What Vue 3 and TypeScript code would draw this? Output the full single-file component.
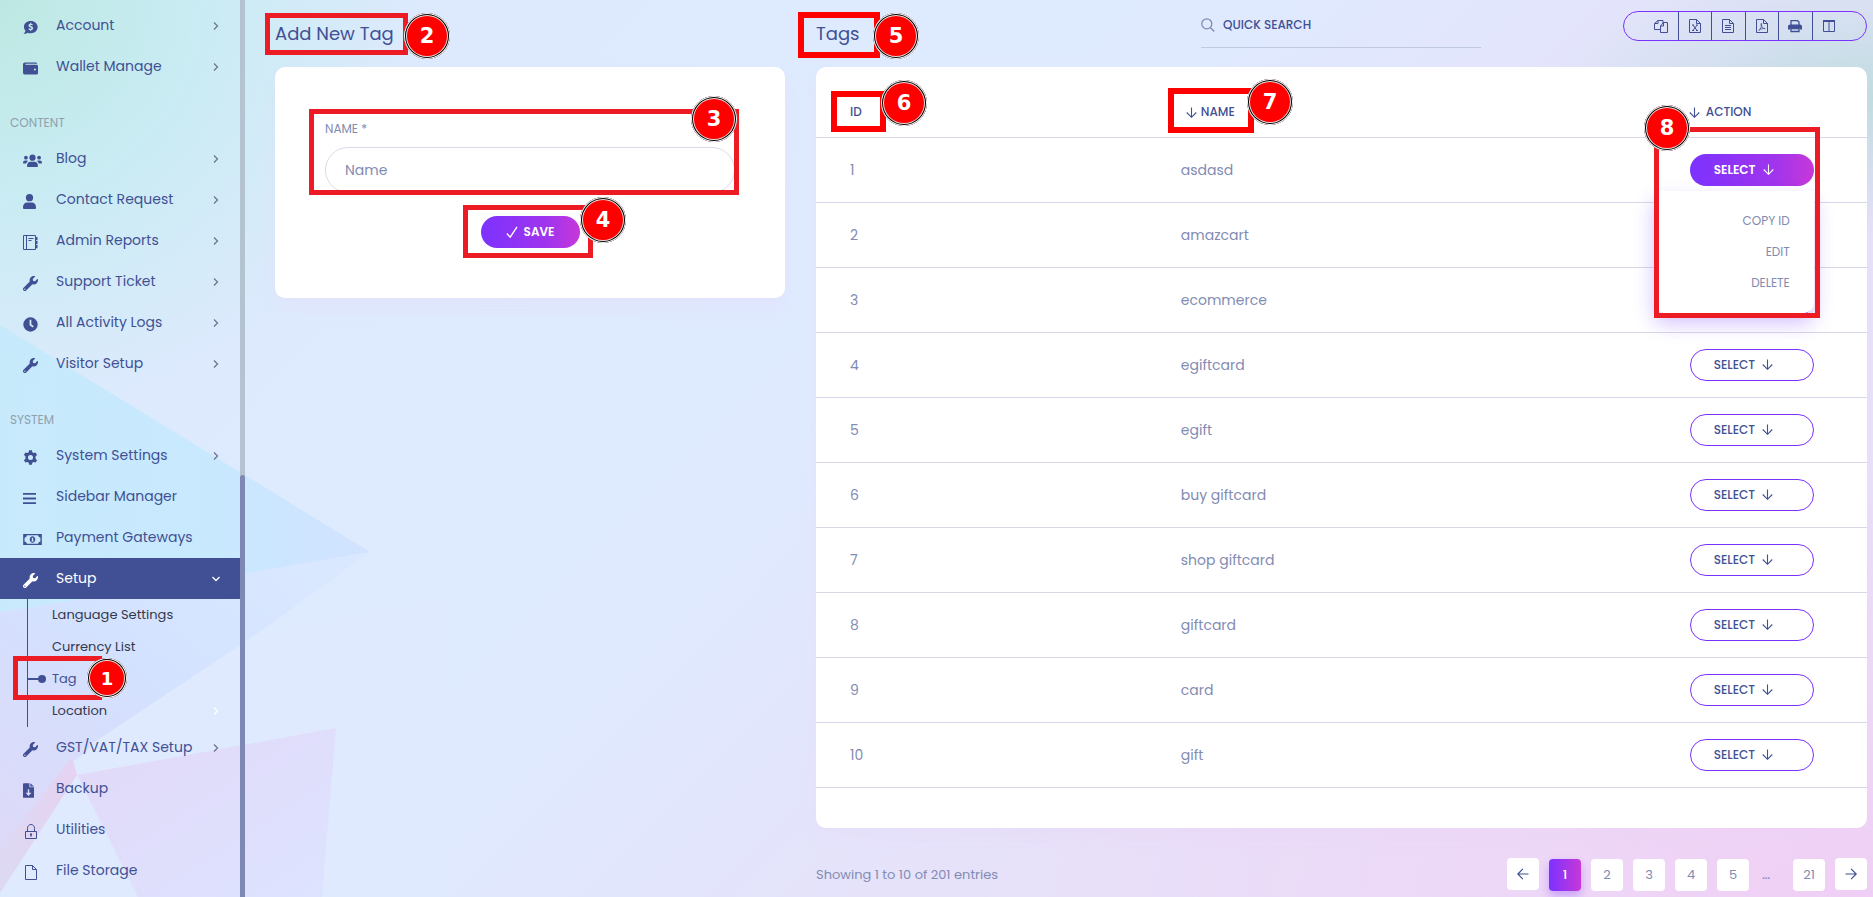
<script setup lang="ts">
import { ref } from 'vue'

interface NavItem {
  label: string
  icon: string
  arrow?: boolean
  children?: { label: string; active?: boolean; arrow?: boolean }[]
}
interface NavGroup {
  title?: string
  items: NavItem[]
}

const groups: NavGroup[] = [
  {
    items: [
      { label: 'Account', icon: 'comment', arrow: true },
      { label: 'Wallet Manage', icon: 'wallet', arrow: true },
    ],
  },
  {
    title: 'CONTENT',
    items: [
      { label: 'Blog', icon: 'users', arrow: true },
      { label: 'Contact Request', icon: 'user', arrow: true },
      { label: 'Admin Reports', icon: 'agenda', arrow: true },
      { label: 'Support Ticket', icon: 'wrench', arrow: true },
      { label: 'All Activity Logs', icon: 'clock', arrow: true },
      { label: 'Visitor Setup', icon: 'wrench', arrow: true },
    ],
  },
  {
    title: 'SYSTEM',
    items: [
      { label: 'System Settings', icon: 'cog', arrow: true },
      { label: 'Sidebar Manager', icon: 'bars', arrow: false },
      { label: 'Payment Gateways', icon: 'money', arrow: false },
      {
        label: 'Setup',
        icon: 'wrench',
        children: [
          { label: 'Language Settings' },
          { label: 'Currency List' },
          { label: 'Tag', active: true },
          { label: 'Location', arrow: true },
        ],
      },
      { label: 'GST/VAT/TAX Setup', icon: 'wrench', arrow: true },
      { label: 'Backup', icon: 'download' },
      { label: 'Utilities', icon: 'lock' },
      { label: 'File Storage', icon: 'file' },
    ],
  },
]

const tags = ['asdasd', 'amazcart', 'ecommerce', 'egiftcard', 'egift', 'buy giftcard', 'shop giftcard', 'giftcard', 'card', 'gift']
const exportTools = ['copy', 'excel', 'text', 'pdf', 'print', 'columns']
const pages = ['1', '2', '3', '4', '5', '…', '21']
const openRow = ref(0)
const tagName = ref('')
const query = ref('')
const currentPage = ref('1')
</script>

<template>
  <svg class="defs" aria-hidden="true">
    <symbol id="i-comment" viewBox="0 0 16 16"><path fill="currentColor" fill-rule="evenodd" d="M8.3 1C4 1 1 3.700 1 7.200c0 1.700.7 3.200 1.700 4.300C2.400 12.800 1.500 13.800.6 14.700c1.900.2 3.400-.4 4.500-1.200 1 .4 2 .6 3.200.6 4.200 0 7.300-2.900 7.300-6.600S12.500 1 8.300 1zM7.700 3h1.100v1c.6 0 1.200.2 1.700.5l-.5 1.200c-.7-.4-2.100-.6-2.100.2 0 .9 2.900.6 2.900 2.800 0 1-.7 1.700-2 1.900v1H7.700v-.9c-.7-.1-1.400-.3-1.900-.7l.6-1.200c.9.6 2.500.7 2.500-.1 0-1-3-.6-3-2.800 0-1 .7-1.700 1.800-1.900z"/></symbol>
    <symbol id="i-wallet" viewBox="0 0 16 16"><path fill="currentColor" fill-rule="evenodd" d="M2 1.500h12c.6 0 1 .4 1 1V3H3c-.7 0-.7 1 0 1h11.500c.8 0 1.500.7 1.500 1.500V13c0 .8-.7 1.500-1.500 1.500H2c-1.100 0-2-.9-2-2v-9c0-1.100.9-2 2-2zM12.700 8a1.100 1.100 0 100 2.200 1.100 1.100 0 000-2.200z"/></symbol>
    <symbol id="i-users" viewBox="0 0 20 16"><g fill="currentColor"><circle cx="10" cy="5" r="3.300"/><circle cx="3" cy="5" r="2"/><circle cx="17" cy="5" r="2"/><path d="M4.300 15v-2c0-2.200 1.500-3.700 3.500-3.700h4.400c2 0 3.500 1.500 3.500 3.700v2zM0 11.200V10c0-1.200.8-2 2-2h2c.5 0 1 .2 1.300.5C4.300 9.100 3.600 10 3.300 11.200zM20 11.200V10c0-1.200-.8-2-2-2h-2c-.5 0-1 .2-1.300.5 1 .6 1.700 1.500 2 2.700z"/></g></symbol>
    <symbol id="i-user" viewBox="0 0 14 16"><g fill="currentColor"><circle cx="7" cy="3.900" r="3.900"/><path d="M0 16v-2.200C0 11 2 9 4.600 9h4.800C12 9 14 11 14 13.800V15c0 .6-.4 1-1 1H1c-.6 0-1-.4-1-1z"/></g></symbol>
    <symbol id="i-agenda" viewBox="0 0 15 15"><path fill="none" stroke="currentColor" d="M.5.500h12v14H.5zM3.500.5v14M5.500 3.500h5M5.500 5.500h3"/><path fill="currentColor" d="M12.500 2h2v3.300h-2zM12.500 6h2v3.300h-2zM12.500 10h2v3.300h-2z"/></symbol>
    <symbol id="i-wrench" viewBox="0 0 512 512"><path fill="currentColor" fill-rule="evenodd" d="M507.730 109.100c-2.240-9.030-13.540-12.090-20.120-5.510l-74.360 74.360-67.880-11.310-11.310-67.880 74.360-74.360c6.620-6.620 3.430-17.900-5.660-20.160-47.380-11.740-99.550.91-136.580 37.930-39.640 39.640-50.550 97.100-34.050 147.200L18.740 402.760c-24.990 24.990-24.990 65.510 0 90.500 24.990 24.990 65.510 24.990 90.500 0l213.210-213.210c50.120 16.710 107.470 5.680 147.370-34.220 37.070-37.070 49.700-89.320 37.910-136.730zM64 472c-13.250 0-24-10.750-24-24s10.750-24 24-24 24 10.750 24 24-10.750 24-24 24z"/></symbol>
    <symbol id="i-clock" viewBox="0 0 16 16"><path fill="currentColor" fill-rule="evenodd" d="M8 .3a7.700 7.700 0 100 15.400A7.700 7.700 0 008 .3zM7 3h1.900v4.800l2.600 2-1.100 1.500L7 8.700z"/></symbol>
    <symbol id="i-cog" viewBox="0 0 16 16"><path fill="currentColor" fill-rule="evenodd" d="M6.500.3h3l.4 2.100 1.600.9 2-.7 1.500 2.600-1.600 1.400v2.800l1.600 1.400-1.500 2.600-2-.7-1.600.9-.4 2.100h-3l-.4-2.100-1.600-.9-2 .7L1 10.800l1.600-1.400V6.600L1 5.200l1.500-2.600 2 .7 1.600-.9zM8 5.300a2.700 2.700 0 100 5.400 2.700 2.700 0 000-5.400z"/></symbol>
    <symbol id="i-bars" viewBox="0 0 14 16"><path stroke="currentColor" stroke-width="2" d="M0 3h14M0 8h14M0 13h14"/></symbol>
    <symbol id="i-money" viewBox="0 0 20 16"><path fill="none" stroke="currentColor" stroke-width="1.500" d="M.8 2.800h18.400v10.400H.8z"/><path fill="currentColor" fill-rule="evenodd" d="M1 3h3a3 3 0 01-3 3zM19 3h-3a3 3 0 003 3zM1 13h3a3 3 0 00-3-3zM19 13h-3a3 3 0 013-3zM10 4.500c-1.700 0-3 1.500-3 3.500s1.300 3.500 3 3.500 3-1.500 3-3.500-1.300-3.500-3-3.500zM9.300 6h1.400v3h.6v1H8.800V9h.6V7H9z"/></symbol>
    <symbol id="i-download" viewBox="0 0 12 16"><path fill="currentColor" fill-rule="evenodd" d="M1 0h6v4.500h5V15c0 .6-.4 1-1 1H1c-.6 0-1-.4-1-1V1c0-.6.4-1 1-1zM8 0l4 3.600H8zM5.200 6.500v4H2.800L6 14l3.200-3.500H6.800v-4z"/></symbol>
    <symbol id="i-lock" viewBox="0 0 15 15"><path fill="none" stroke="currentColor" d="M2.500 7.500h11v7h-11zM4.500 7.500V4.300C4.500 2 6 .5 8 .5s3.500 1.500 3.500 3.800v3.200"/><path stroke="currentColor" stroke-width="1.500" d="M8 9.500v3M7 10.200h2"/></symbol>
    <symbol id="i-file" viewBox="0 0 15 15"><path fill="none" stroke="currentColor" d="M2.500.5h7l4 4v10h-11zM9.500.5v4h4"/></symbol>
    <symbol id="i-copy" viewBox="0 0 14 14"><path fill="none" stroke="currentColor" d="M6.500 10.500h-6v-6l3.500-3h5v3M4 1.500v3H.5M6.500 7l3-3.500h4v10h-7zM9.500 3.500V7h-3"/></symbol>
    <symbol id="i-excel" viewBox="0 0 12 14"><path fill="none" stroke="currentColor" d="M.5.500h7l4 4v9H.5zM7.500.5v4h4M4 6l4 5.500M8 6l-4 5.500M3 6h2M7 6h2M3 11.500h2M7 11.500h2"/></symbol>
    <symbol id="i-text" viewBox="0 0 12 14"><path fill="none" stroke="currentColor" d="M.5.500h7l4 4v9H.5zM7.500.5v4h4M3 6.500h6M3 8.500h6M3 10.500h6"/></symbol>
    <symbol id="i-pdf" viewBox="0 0 12 14"><path fill="none" stroke="currentColor" d="M.5.500h7l4 4v9H.5zM7.500.5v4h4"/><path fill="none" stroke="currentColor" stroke-width=".8" d="M2.500 11.500c2-1 3.300-4 3.200-6.500 0-1-.9-.8-.8.200.3 2.500 2 4.300 4.300 4.600M3 11c1.500-1 4-1.800 6-1.400"/></symbol>
    <symbol id="i-print" viewBox="0 0 14 14"><path fill="none" stroke="currentColor" stroke-width="1.300" d="M3 6V1.700h6.500L11 3v3M3 9.500h8v3H3z"/><path fill="currentColor" d="M2 5.500h10c1 0 2 .8 2 2v3h-2.500V9h-9v1.500H0v-3c0-1.200 1-2 2-2z"/></symbol>
    <symbol id="i-columns" viewBox="0 0 14 14"><path fill="none" stroke="currentColor" d="M1.500 1.500h11v11h-11zM7 2.500v10"/><path fill="currentColor" d="M1 1h12v2H1z"/></symbol>
    <symbol id="i-search" viewBox="0 0 14 14"><path fill="none" stroke="currentColor" stroke-width="1.300" d="M9.300 9.500l4 4M10.800 5.800a5 5 0 11-10 0 5 5 0 0110 0z"/></symbol>
    <symbol id="i-down" viewBox="0 0 12 12"><path fill="none" stroke="currentColor" stroke-width="1.200" d="M6 .5v10.500M.8 6L6 11.200 11.200 6"/></symbol>
    <symbol id="i-left" viewBox="0 0 12 12"><path fill="none" stroke="currentColor" stroke-width="1.200" d="M11.500 6H.9M5.900.8L.8 6l5.100 5.200"/></symbol>
    <symbol id="i-right" viewBox="0 0 12 12"><path fill="none" stroke="currentColor" stroke-width="1.200" d="M.5 6h10.600M6.100.8L11.200 6l-5.100 5.200"/></symbol>
    <symbol id="i-check" viewBox="0 0 12 12"><path fill="none" stroke="currentColor" stroke-width="1.300" d="M.8 7.500l3.400 3.700L11 .8"/></symbol>
    <symbol id="i-chevron" viewBox="0 0 8 8"><path fill="none" stroke="currentColor" stroke-width="1.300" d="M2 .5L5.500 4 2 7.500"/></symbol>
  </svg>

  <div class="page">
    <svg class="backdrop" viewBox="0 0 1873 897" preserveAspectRatio="none" aria-hidden="true">
      <defs>
        <linearGradient id="bg-cyan" x1="0" y1="0" x2="1" y2="0"><stop offset="0" stop-color="#c2eafb" /><stop offset="0.6" stop-color="#c3e8ff" /><stop offset="1" stop-color="#cfe0ff" /></linearGradient>
        <linearGradient id="bg-blue" x1="1" y1="0" x2="0" y2="1"><stop offset="0" stop-color="#dbe9ff" /><stop offset="0.5" stop-color="#d3e2ff" /><stop offset="1" stop-color="#ddd8f8" /></linearGradient>
        <linearGradient id="bg-pink" x1="0" y1="0" x2="1" y2="1"><stop offset="0" stop-color="#e2d9f8" /><stop offset="1" stop-color="#dde3ff" /></linearGradient>
        <linearGradient id="bg-rose" x1="0" y1="0" x2="1" y2="0"><stop offset="0" stop-color="#ddd9f2" /><stop offset="1" stop-color="#e6d2f2" /></linearGradient>
      </defs>
      <polygon class="cyan" points="0,325 70,368 370,552 255,572 0,612" />
      <polygon class="blue" points="0,612 255,572 370,552 255,635 75,760 0,850" />
      <polygon class="pale" points="75,775 90,745 255,635 440,600 440,897 0,897" />
      <polygon class="pink" points="77,775 336,728 322,897 138,897" />
      <polygon class="rose" points="72,757 77,775 0,893 0,850" />
    </svg>

    <nav class="sidebar" aria-label="Main menu">
      <div v-for="(group, g) in groups" :key="g">
        <h2 v-if="group.title" class="group-title">{{ group.title }}</h2>
        <ul class="menu">
          <li v-for="item in group.items" :key="item.label">
            <a href="#" class="menu-link" :class="{ open: item.children }">
              <svg class="menu-icon" :class="item.icon"><use :href="`#i-${item.icon}`" /></svg>
              <span>{{ item.label }}</span>
              <svg v-if="item.arrow || item.children" class="chevron"><use href="#i-chevron" /></svg>
            </a>
            <ul v-if="item.children" class="submenu">
              <li v-for="child in item.children" :key="child.label">
                <a href="#" :class="{ active: child.active }">
                  {{ child.label }}
                  <svg v-if="child.arrow" class="chevron"><use href="#i-chevron" /></svg>
                </a>
              </li>
            </ul>
          </li>
        </ul>
      </div>
    </nav>
    <div class="track"><div class="thumb"></div></div>

    <main class="content">
      <section>
        <header class="section-head"><h1>Add New Tag</h1></header>
        <form class="card form-card" @submit.prevent>
          <label for="tag-name">NAME *</label>
          <input id="tag-name" v-model="tagName" type="text" placeholder="Name" />
          <button type="submit" class="save"><svg><use href="#i-check" /></svg>SAVE</button>
        </form>
      </section>

      <section>
        <header class="section-head">
          <h1>Tags</h1>
          <label class="search">
            <svg><use href="#i-search" /></svg>
            <input v-model="query" type="search" placeholder="QUICK SEARCH" aria-label="Quick search" />
          </label>
          <div class="tools">
            <button v-for="tool in exportTools" :key="tool" type="button" :aria-label="tool">
              <svg><use :href="`#i-${tool}`" /></svg>
            </button>
          </div>
        </header>
        <div class="card table-card">
          <table>
            <colgroup><col class="c-id" /><col class="c-name" /><col class="c-action" /></colgroup>
            <thead>
              <tr>
                <th>ID</th>
                <th><span class="sort"><svg><use href="#i-down" /></svg>NAME</span></th>
                <th><span class="sort wide"><svg><use href="#i-down" /></svg>ACTION</span></th>
              </tr>
            </thead>
            <tbody>
              <tr v-for="(tag, i) in tags" :key="tag">
                <td>{{ i + 1 }}</td>
                <td>{{ tag }}</td>
                <td>
                  <div class="dropdown">
                    <button type="button" class="select" :class="{ open: openRow === i }" @click="openRow = openRow === i ? -1 : i">
                      SELECT<svg><use href="#i-down" /></svg>
                    </button>
                    <div v-if="openRow === i" class="options">
                      <a href="#">COPY ID</a>
                      <a href="#">EDIT</a>
                      <a href="#">DELETE</a>
                    </div>
                  </div>
                </td>
              </tr>
            </tbody>
          </table>
        </div>
        <footer class="table-foot">
          <p>Showing 1 to 10 of 201 entries</p>
          <div class="pager">
            <button type="button" class="step" aria-label="Previous"><svg><use href="#i-left" /></svg></button>
            <template v-for="page in pages" :key="page">
              <span v-if="page === '…'" class="dots">…</span>
              <button v-else type="button" :class="{ current: page === currentPage }" @click="currentPage = page">{{ page }}</button>
            </template>
            <button type="button" class="step" aria-label="Next"><svg><use href="#i-right" /></svg></button>
          </div>
        </footer>
      </section>
    </main>

    <div class="frame f1"></div><b class="mark m1">1</b>
    <div class="frame f2"></div><b class="mark m2">2</b>
    <div class="frame f3"></div><b class="mark m3">3</b>
    <div class="frame f4"></div><b class="mark m4">4</b>
    <div class="frame bold f5"></div><b class="mark m5">5</b>
    <div class="frame bold f6"></div><b class="mark m6">6</b>
    <div class="frame bold f7"></div><b class="mark m7">7</b>
    <div class="frame f8"></div><b class="mark m8">8</b>
  </div>
</template>

<style>
body {
  margin: 0;
}
</style>

<style scoped>
* {
  box-sizing: border-box;
}
.defs {
  position: absolute;
  width: 0;
  height: 0;
}
.page {
  position: relative;
  display: flex;
  min-height: 100vh;
  overflow: hidden;
  font-family: Poppins, Inter, "Open Sans", sans-serif;
  font-size: 14px;
  color: #828bb2;
  background:
    radial-gradient(circle at 0 0, #bde8e2 0, rgba(195, 236, 240, 0.8) 180px, rgba(200, 232, 245, 0) 420px),
    radial-gradient(ellipse at 100% 11%, #bfdddf 0, rgba(200, 222, 232, 0.8) 130px, rgba(225, 225, 250, 0) 330px),
    radial-gradient(ellipse at 100% 100%, #f0cef5 0, rgba(239, 213, 246, 0.8) 340px, rgba(236, 220, 247, 0) 900px),
    linear-gradient(135deg, #dceafc 0%, #dfeaff 45%, #e6e2fa 65%, #e8dff8 100%);
}
.backdrop {
  position: absolute;
  inset: 0;
  width: 100%;
  height: 100%;
}
.cyan {
  fill: url(#bg-cyan);
  opacity: 0.8;
}
.blue {
  fill: url(#bg-blue);
}
.pale {
  fill: #dfeaff;
}
.pink {
  fill: url(#bg-pink);
}
.rose {
  fill: url(#bg-rose);
}
a {
  color: inherit;
  text-decoration: none;
}
button {
  font: inherit;
  color: inherit;
  cursor: pointer;
}
ul {
  margin: 0;
  padding: 0;
  list-style: none;
}
.sidebar {
  position: relative;
  flex: 0 0 240px;
  padding: 5px 0;
  color: #415094;
}
.group-title {
  margin: 0;
  padding: 26px 10px 5px;
  font-size: 12px;
  line-height: 20px;
  font-weight: 400;
  color: #8f9fae;
}
.menu-link {
  display: grid;
  grid-template-columns: 33px 1fr 8px;
  align-items: center;
  height: 41px;
  padding: 0 20px 0 23px;
  font-size: 14px;
}
.menu-icon {
  width: 15px;
  height: 15px;
  margin-top: 3px;
}
.menu-icon.users,
.menu-icon.money {
  width: 19px;
}
.menu-icon.user,
.menu-icon.bars {
  width: 13px;
}
.menu-icon.download {
  width: 11px;
}
.chevron {
  width: 8px;
  height: 8px;
  color: #6d7690;
}
.menu-link.open {
  color: #fff;
  background: #415094;
}
.menu-link.open .chevron {
  color: #fff;
  transform: rotate(90deg);
}
.submenu {
  margin-left: 27px;
  border-left: 1px solid #415094;
}
.submenu a {
  display: flex;
  align-items: center;
  justify-content: space-between;
  height: 32px;
  padding: 0 20px 0 24px;
  font-size: 13px;
  color: #34384c;
}
.submenu .chevron {
  color: #fff;
}
.submenu .active {
  position: relative;
  color: #415094;
}
.active::before {
  content: "";
  position: absolute;
  left: 0;
  width: 12px;
  height: 2px;
  background: #415094;
}
.active::after {
  content: "";
  position: absolute;
  left: 10px;
  width: 8px;
  height: 8px;
  border-radius: 50%;
  background: #415094;
}
.track {
  position: relative;
  display: flex;
  flex-direction: column;
  justify-content: flex-end;
  flex: 0 0 5px;
  background: #b3c3cf;
}
.thumb {
  height: 47%;
  border-radius: 3px 3px 0 0;
  background: #7d88b4;
}
.content {
  position: relative;
  flex: 1;
  display: grid;
  grid-template-columns: 510fr 1051fr;
  column-gap: 31px;
  align-items: start;
  padding: 0 6px 0 30px;
}
.section-head {
  display: grid;
  grid-template-columns: 385fr 280fr 142fr 244px;
  height: 67px;
  color: #415094;
}
h1 {
  margin: 0;
  padding-top: 20px;
  font-size: 18px;
  line-height: 28px;
  font-weight: 400;
  white-space: nowrap;
}
.card {
  border-radius: 10px;
  background: #fff;
  box-shadow: 0 10px 15px rgba(236, 208, 244, 0.2);
}
.form-card {
  display: flex;
  flex-direction: column;
  padding: 53px 50px 50px;
}
.form-card label {
  margin-bottom: 9px;
  font-size: 12px;
  line-height: 18px;
}
.form-card input {
  height: 46px;
  padding: 0 19px;
  border: 1px solid #dcd9e8;
  border-radius: 23px;
  font: inherit;
  color: #415094;
  outline: none;
}
::placeholder {
  color: #828bb2;
  opacity: 1;
}
.save {
  display: flex;
  align-items: center;
  justify-content: center;
  gap: 6px;
  align-self: center;
  width: 99px;
  height: 32px;
  margin-top: 23px;
  border: 0;
  border-radius: 16px;
  background: linear-gradient(90deg, #7c32ff 0%, #a235ec 70%, #c738d8 100%);
  color: #fff;
  font-size: 12px;
  font-weight: 600;
}
.save svg {
  width: 12px;
  height: 12px;
}
.search {
  grid-column: 2;
  display: flex;
  align-items: center;
  gap: 8px;
  height: 48px;
  padding-top: 2px;
  border-bottom: 1px solid #c0c9e2;
}
.search svg {
  flex: none;
  width: 14px;
  height: 14px;
  color: #828bb2;
}
.search input {
  flex: 1;
  min-width: 0;
  padding: 0;
  border: 0;
  background: none;
  font: inherit;
  font-size: 12px;
  font-weight: 500;
  outline: none;
}
.search ::placeholder {
  color: #415094;
}
.tools {
  grid-column: 4;
  display: flex;
  height: 30px;
  margin-top: 11px;
  padding: 0 21px;
  border: 1px solid #7c32ff;
  border-radius: 15px;
}
.tools button {
  flex: 1;
  display: flex;
  align-items: center;
  justify-content: center;
  padding: 0;
  border: 0;
  border-right: 1px solid #415094;
  background: none;
}
.tools button:last-child {
  border: 0;
}
.tools svg {
  width: 14px;
  height: 14px;
}
.table-card {
  padding-bottom: 40px;
}
table {
  width: 100%;
  border-collapse: collapse;
  table-layout: fixed;
}
.c-id {
  width: 31%;
}
.c-name {
  width: 49%;
}
.c-action {
  width: 20%;
}
th {
  height: 70px;
  padding: 21px 0 0 34px;
  text-align: left;
  font-size: 12px;
  font-weight: 500;
  color: #415094;
  border-bottom: 1px solid #d9d8e8;
}
td {
  height: 65px;
  padding: 2px 0 0 34px;
  border-bottom: 1px solid #d9d8e8;
}
th:nth-child(2),
td:nth-child(2) {
  padding-left: 39px;
}
td:nth-child(3) {
  padding: 0 0 0 33px;
}
.sort {
  display: flex;
  align-items: center;
  gap: 4px;
}
th:nth-child(2) .sort {
  padding-left: 5px;
}
th:nth-child(3) {
  padding-left: 32px;
}
.sort.wide {
  gap: 6px;
}
.sort svg {
  width: 11px;
  height: 11px;
}
.dropdown {
  position: relative;
  width: 124px;
}
.select {
  display: flex;
  align-items: center;
  gap: 7px;
  width: 124px;
  height: 32px;
  padding: 0 23px;
  border: 1px solid #7c32ff;
  border-radius: 16px;
  background: #fff;
  color: #415094;
  font-size: 12px;
  font-weight: 500;
}
.select svg {
  width: 11px;
  height: 11px;
}
.select.open {
  border-color: transparent;
  background: linear-gradient(90deg, #7c32ff 0%, #a235ec 70%, #c738d8 100%) border-box;
  color: #fff;
  font-weight: 600;
}
.options {
  position: absolute;
  top: 37px;
  right: 0;
  z-index: 1;
  width: 160px;
  padding: 14px 24px 15px;
  border-radius: 0 0 10px 10px;
  background: #fff;
  box-shadow: 0 10px 20px rgba(108, 39, 255, 0.3);
  text-align: right;
  font-size: 12px;
}
.options a {
  display: block;
  line-height: 31px;
}
.table-foot {
  display: flex;
  justify-content: space-between;
  padding-top: 30px;
}
.table-foot p {
  margin: 0;
  font-size: 13px;
  line-height: 34px;
}
.pager {
  display: flex;
  gap: 10px;
}
.pager button {
  display: flex;
  align-items: center;
  justify-content: center;
  width: 32px;
  height: 32px;
  margin-top: 1px;
  padding: 0;
  border: 0;
  border-radius: 4px;
  background: #fff;
  font-size: 13px;
}
.pager .step {
  margin-top: 0;
  color: #415094;
}
.pager svg {
  width: 12px;
  height: 12px;
}
.pager .current {
  background: linear-gradient(90deg, #7c32ff, #c738d8);
  box-shadow: 0 5px 10px rgba(108, 39, 255, 0.3);
  color: #fff;
  font-weight: 500;
}
.dots {
  width: 24px;
  line-height: 32px;
  text-indent: 3px;
}
.frame {
  position: absolute;
  z-index: 2;
  border: 5px solid #ed1c24;
  pointer-events: none;
}
.frame.bold {
  border: 6px solid #f00;
}
.mark {
  position: absolute;
  z-index: 3;
  display: flex;
  align-items: center;
  justify-content: center;
  width: 46px;
  height: 46px;
  border-radius: 50%;
  background: #f00;
  box-shadow: inset 0 0 0 1px #fff, inset 0 0 0 2px #000, inset 0 0 0 3px #f3dada;
  color: #fff;
  font: bold 21px "DejaVu Sans", sans-serif;
}
.f1 { left: 13px; top: 656px; width: 89px; height: 44px; border-right: 0; }
.f2 { left: 265px; top: 13px; width: 143px; height: 42px; }
.f3 { left: 309px; top: 109px; width: 430px; height: 86px; }
.f4 { left: 463px; top: 205px; width: 130px; height: 53px; }
.f5 { left: 798px; top: 12px; width: 82px; height: 46px; }
.f6 { left: 831px; top: 91px; width: 55px; height: 41px; }
.f7 { left: 1168px; top: 88px; width: 86px; height: 45px; }
.f8 { left: 1654px; top: 127px; width: 166px; height: 191px; }
.m1 { left: 87px; top: 658px; width: 40px; height: 40px; font-size: 18px; }
.m2 { left: 404px; top: 13px; }
.m3 { left: 691px; top: 96px; }
.m4 { left: 580px; top: 197px; }
.m5 { left: 873px; top: 13px; }
.m6 { left: 881px; top: 80px; }
.m7 { left: 1247px; top: 79px; }
.m8 { left: 1644px; top: 105px; }
</style>
